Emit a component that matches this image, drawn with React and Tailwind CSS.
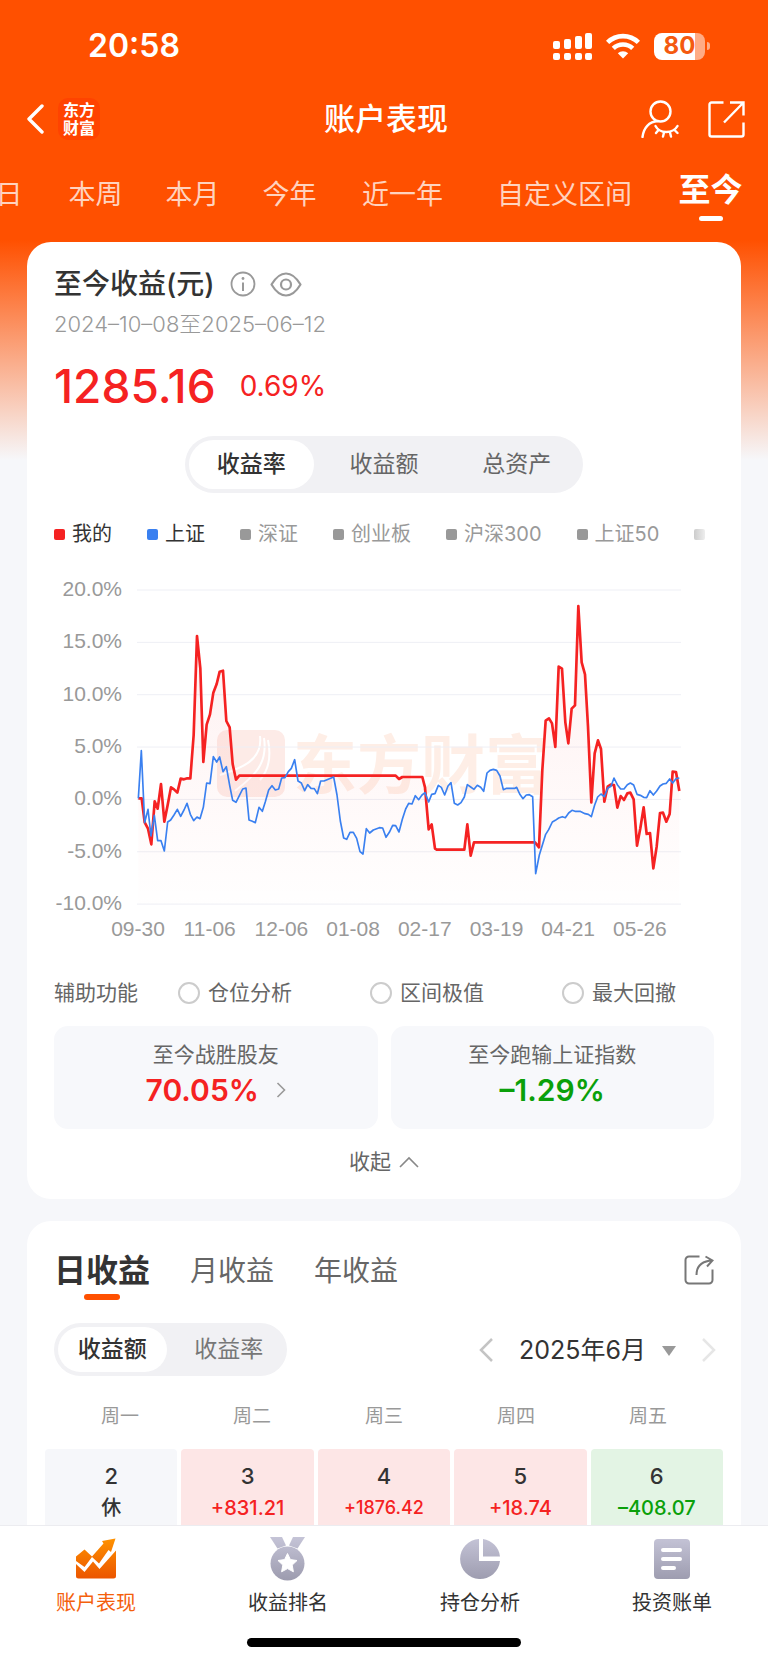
import React, { useState } from 'react';

const ranges = [
  { name: '今日', width: 'w-[103px]' },
  { name: '本周', width: 'w-[97px]' },
  { name: '本月', width: 'w-[97px]' },
  { name: '今年', width: 'w-[97px]' },
  { name: '近一年', width: 'w-[129px]' },
  { name: '自定义区间', width: 'w-[195px]' },
  { name: '至今', width: 'w-[97px]' },
];

const legend = [
  { name: '我的', dot: 'bg-[#f52222]', text: 'text-[#333]' },
  { name: '上证', dot: 'bg-[#3a80f0]', text: 'text-[#333]' },
  { name: '深证', dot: 'bg-[#999]', text: 'text-[#999]' },
  { name: '创业板', dot: 'bg-[#999]', text: 'text-[#999]' },
  { name: '沪深300', dot: 'bg-[#999]', text: 'text-[#999]' },
  { name: '上证50', dot: 'bg-[#999]', text: 'text-[#999]' },
];

const yLabels = ['20.0%', '15.0%', '10.0%', '5.0%', '0.0%', '-5.0%', '-10.0%'];
const xLabels = ['09-30', '11-06', '12-06', '01-08', '02-17', '03-19', '04-21', '05-26'];

// plot area is 1632 x 942 units, 0% sits at y = 625
const mine =
  '4,625 14,625 23,697 33,716 43,763 53,634 62,656 72,582 82,695 92,645 102,592 111,598 121,608 131,566 141,568 151,565 160,565 170,435 180,138 190,235 199,516 209,404 219,373 229,308 239,282 248,245 258,242 268,393 278,412 287,522 297,569 307,557 776,557 786,567 796,561 856,561 864,592 875,718 884,703 894,776 899,779 982,779 991,703 1001,797 1011,757 1194,757 1206,772 1216,540 1226,392 1236,385 1245,400 1255,471 1265,230 1275,236 1285,397 1294,460 1304,356 1314,346 1324,48 1334,217 1344,253 1353,410 1363,637 1373,490 1383,451 1392,477 1402,635 1412,590 1421,584 1431,585 1441,653 1451,618 1461,630 1471,610 1480,608 1490,628 1500,767 1510,715 1520,652 1529,732 1539,729 1549,835 1559,770 1569,669 1578,668 1588,695 1598,672 1607,545 1617,546 1627,603';
const index =
  '4,625 13,482 23,698 33,658 42,738 52,676 62,752 72,752 82,783 92,696 101,690 111,675 121,658 131,679 141,660 150,640 160,673 170,692 180,681 189,686 199,652 209,579 219,581 229,500 239,516 248,501 258,545 268,530 278,586 287,631 297,637 307,617 317,597 327,594 336,690 346,694 355,698 366,652 376,664 385,635 395,600 405,587 415,600 425,597 434,564 444,563 454,545 463,535 473,509 483,573 493,579 503,602 512,584 522,595 532,596 541,611 551,573 561,573 590,561 600,615 610,693 620,744 629,748 639,727 649,727 659,745 669,785 678,792 688,716 698,729 709,720 727,713 737,714 747,742 757,727 767,706 776,707 786,726 796,688 806,657 815,640 825,642 835,617 845,629 855,615 864,608 875,636 884,613 894,611 904,586 913,592 923,615 933,588 942,578 952,640 962,645 972,638 982,621 991,584 1001,591 1011,598 1021,586 1031,592 1040,604 1050,549 1059,541 1069,538 1079,541 1089,558 1099,599 1109,595 1134,595 1139,592 1148,612 1158,626 1168,615 1177,614 1187,620 1196,851 1207,795 1226,733 1235,719 1246,696 1255,691 1265,684 1276,680 1285,683 1295,669 1305,661 1314,664 1329,664 1344,671 1354,673 1363,680 1373,645 1382,621 1392,612 1402,620 1412,595 1422,589 1431,564 1441,584 1451,597 1461,597 1471,584 1480,579 1490,585 1500,613 1510,616 1520,622 1529,623 1539,602 1549,615 1559,603 1569,588 1578,582 1588,580 1598,567 1607,579 1617,566 1627,564';

const weekdays = ['周一', '周二', '周三', '周四', '周五'];
const days = [
  { day: 2, value: '休', box: 'bg-[#f6f7fa]', text: 'text-[#333] text-xl' },
  { day: 3, value: '+831.21', box: 'bg-[#fde6e6]', text: 'text-[#f52222] text-xl' },
  { day: 4, value: '+1876.42', box: 'bg-[#fde6e6]', text: 'text-[#f52222] text-lg' },
  { day: 5, value: '+18.74', box: 'bg-[#fde6e6]', text: 'text-[#f52222] text-xl' },
  { day: 6, value: '–408.07', box: 'bg-[#e3f4e4]', text: 'text-[#0aa00a] text-xl' },
];

const StatusBar = () => (
  <div className="flex h-[87px] items-center justify-between pl-[88px] pr-[58px] pt-[5px]">
    <span className="text-[32px] font-semibold leading-10">20:58</span>
    <div className="flex items-center gap-[14px]">
      <svg width="39" height="27" viewBox="0 0 39 27" fill="currentColor">
        <rect x="0" y="8" width="7" height="8" rx="2" />
        <rect x="11" y="6" width="7" height="10" rx="2" />
        <rect x="22" y="3" width="7" height="13" rx="2" />
        <rect x="32" y="0" width="7" height="16" rx="2" />
        <rect x="0" y="20" width="7" height="7" rx="2" />
        <rect x="11" y="20" width="7" height="7" rx="2" />
        <rect x="22" y="20" width="7" height="7" rx="2" />
        <rect x="32" y="20" width="7" height="7" rx="2" />
      </svg>
      <svg width="34" height="26" viewBox="0 0 34 26" fill="none" stroke="currentColor" strokeWidth="4.6">
        <path d="M1.6 9.4a22 22 0 0 1 30.8 0" />
        <path d="M7.3 15.4a14 14 0 0 1 19.4 0" />
        <path d="M17 25.5l-5.2-5.2a7.4 7.4 0 0 1 10.4 0z" fill="currentColor" stroke="none" />
      </svg>
      <div className="flex items-center gap-[2px]">
        <div className="flex h-[27px] w-[51px] items-center justify-center rounded-lg bg-[linear-gradient(to_right,#fff_80%,#ffab85_80%)]">
          <span className="text-2xl font-bold leading-none text-[#f45a10]">80</span>
        </div>
        <div className="h-2 w-[3px] rounded-r-full bg-[#ffab85]" />
      </div>
    </div>
  </div>
);

const TitleBar = () => (
  <div className="grid h-16 grid-cols-3 items-center pl-[27px] pr-[23px]">
    <div className="flex items-center gap-[14px]">
      <button aria-label="返回">
        <svg width="17" height="30" viewBox="0 0 17 30" fill="none" stroke="currentColor" strokeWidth="3.4" strokeLinecap="round" strokeLinejoin="round">
          <path d="M15 2L2 15l13 13" />
        </svg>
      </button>
      <div className="flex size-[42px] flex-col items-center justify-center rounded-[10px] bg-[#ff4300] text-base font-bold leading-[18px]">
        <span>东方</span>
        <span>财富</span>
      </div>
    </div>
    <h1 className="text-center text-[31px] font-medium leading-10">账户表现</h1>
    <div className="flex items-center justify-end gap-[29px]">
      <button aria-label="隐藏账户">
        <svg width="38" height="38" viewBox="0 0 38 38" fill="none" stroke="currentColor" strokeWidth="2.4" strokeLinecap="round">
          <circle cx="19.5" cy="11.5" r="10" />
          <path d="M1.5 37C2.500 28 8 21.500 17 21" />
          <path d="M14.500 26c4 8 17.500 8 22 0" />
          <path d="M17.500 30l-2.500 3M23 32.500l-1 4M29 32.500l1 4M33.500 30l3 3" />
        </svg>
      </button>
      <button aria-label="分享">
        <svg width="37" height="37" viewBox="0 0 37 37" fill="none" stroke="currentColor" strokeWidth="2.4">
          <path d="M15.500 1.500H3.500a2 2 0 0 0-2 2V33.500a2 2 0 0 0 2 2H33.500a2 2 0 0 0 2-2V21.500" />
          <path d="M22 1.500h13.500v13M35 2L16 21.500" />
        </svg>
      </button>
    </div>
  </div>
);

const PerformanceChart = () => (
  <svg className="mt-[27px] block w-full" viewBox="0 0 660 370" role="img" aria-label="收益率走势">
    <defs>
      <linearGradient id="area" x1="0" y1="0" x2="0" y2="1">
        <stop offset="0" stopColor="#f52222" stopOpacity="0.07" />
        <stop offset="1" stopColor="#f52222" stopOpacity="0.003" />
      </linearGradient>
    </defs>
    <rect x="163" y="155" width="68" height="67" rx="10" fill="#fdebe7" />
    <g fill="none" stroke="#fff" strokeWidth="2">
      <path d="M206 161c3 24-18 32-40 39" />
      <path d="M210 163c4 26-10 38-29 53" />
      <path d="M214 165c4 20-1 32-8 40" />
    </g>
    <text x="239" y="213" fill="#feeee6" className="text-[64px] font-bold">东方财富</text>
    {yLabels.map((label, i) => (
      <g key={label}>
        <line x1="83" x2="627" y1={15 + i * 52.35} y2={15 + i * 52.35} stroke="#eeeff5" />
        <text x="68" y={21 + i * 52.35} textAnchor="end" fill="#999" className="font-['Liberation_Sans'] text-[21px]">{label}</text>
      </g>
    ))}
    {xLabels.map((label, i) => (
      <text key={label} x={84 + i * 71.7} y="361" textAnchor="middle" fill="#999" className="font-['Liberation_Sans'] text-[21px]">{label}</text>
    ))}
    <svg x="83" y="15" width="544" height="314" viewBox="0 0 1632 942">
      <polygon points={`4,942 ${mine} 1627,942`} fill="url(#area)" />
      <polyline points={mine} fill="none" stroke="#f52222" strokeWidth="8" strokeLinejoin="round" />
      <polyline points={index} fill="none" stroke="#3a80f0" strokeWidth="5" strokeLinejoin="round" />
    </svg>
  </svg>
);

const BottomNav = () => (
  <nav className="shrink-0 border-t border-[#ececf0] bg-white">
    <svg className="absolute size-0">
      <defs>
        <linearGradient id="navOn" x1="0" y1="0" x2="0" y2="46" gradientUnits="userSpaceOnUse">
          <stop offset="0" stopColor="#ff9500" />
          <stop offset="1" stopColor="#ea5000" />
        </linearGradient>
        <linearGradient id="navOff" x1="0" y1="0" x2="0" y2="46" gradientUnits="userSpaceOnUse">
          <stop offset="0" stopColor="#c6c5d8" />
          <stop offset="1" stopColor="#9b9aad" />
        </linearGradient>
      </defs>
    </svg>
    <div className="grid grid-cols-4 pt-[10px] text-xl leading-7 text-[#333]">
      <a href="#account" className="flex flex-col items-center gap-[7px] text-[#f4600c]">
        <svg width="42" height="46" viewBox="0 0 42 46" fill="url(#navOn)">
          <path d="M1 28l8.500 8 8.500-10.500 6.500 7.500L41 14.500V40a2.500 2.500 0 0 1-2.500 2.500h-35A2.500 2.500 0 0 1 1 40z" />
          <path d="M1 20.500L9.500 13.500l7.500 7 11.500-13-1.500-2.500L40.500 2.500 36 16l-2.500-2-9.500 13.500-7-6.500-7.500 10L1 25z" />
        </svg>
        账户表现
      </a>
      <a href="#rank" className="flex flex-col items-center gap-[7px]">
        <svg width="42" height="46" viewBox="0 0 42 46" fill="url(#navOff)">
          <path d="M3 1h12l4 8.500-8.500 3z" />
          <path d="M38 1H26l-4 8.500 8.500 3z" />
          <circle cx="20.500" cy="27.500" r="17" />
          <path d="M20.500 17.500l2.900 6.100 6.600.9-4.800 4.600 1.200 6.700-5.900-3.200-5.900 3.200 1.200-6.700-4.800-4.600 6.600-.9z" fill="#fff" stroke="#fff" strokeLinejoin="round" />
        </svg>
        收益排名
      </a>
      <a href="#position" className="flex flex-col items-center gap-[7px]">
        <svg width="42" height="46" viewBox="0 0 42 46" fill="url(#navOff)">
          <path d="M20 3A20 20 0 1 0 41 25H20z" />
          <path d="M24 3A20 20 0 0 1 41 20.500H24z" />
        </svg>
        持仓分析
      </a>
      <a href="#bill" className="flex flex-col items-center gap-[7px]">
        <svg width="42" height="46" viewBox="0 0 42 46">
          <rect x="3" y="3" width="36" height="40" rx="4" fill="url(#navOff)" />
          <path d="M12 14h17M12 23h17M12 32h11" stroke="#fff" strokeWidth="4" strokeLinecap="round" />
        </svg>
        投资账单
      </a>
    </div>
    <div className="mx-auto mb-[15px] mt-[21px] h-[9px] w-[274px] rounded-full bg-black" />
  </nav>
);

const App = () => {
  const [metric, setMetric] = useState('收益率');
  const [unit, setUnit] = useState('收益额');

  return (
    <div className="flex h-screen flex-col overflow-hidden bg-white font-['Inter','Noto_Sans_CJK_SC',sans-serif]" lang="zh-CN">
      <main className="min-h-0 flex-1 overflow-y-auto bg-[#f6f7fa] [scrollbar-width:none]">
        <div className="bg-[linear-gradient(to_bottom,#ff5000_240px,#f6f7fa_460px)]">
          <header className="text-white">
            <StatusBar />
            <TitleBar />
            <div className="overflow-hidden">
              <div className="-ml-14 flex h-[91px]">
                {ranges.map((r) =>
                  r.name === '至今' ? (
                    <button key={r.name} className={`${r.width} flex shrink-0 flex-col items-center pt-[19px] text-[32px] font-bold leading-10`}>
                      {r.name}
                      <span className="mt-[6px] h-[5px] w-6 rounded-full bg-white" />
                    </button>
                  ) : (
                    <button key={r.name} className={`${r.width} flex shrink-0 justify-center whitespace-nowrap pt-6 text-[27px] leading-10 text-white/75`}>
                      {r.name}
                    </button>
                  )
                )}
              </div>
            </div>
          </header>

          <section className="mx-[27px] rounded-3xl bg-white px-[27px] pb-[21px] pt-6">
            <div className="flex items-center">
              <h2 className="text-[28px] font-medium leading-9 text-[#333]">至今收益(元)</h2>
              <svg className="ml-[15px]" width="26" height="26" viewBox="0 0 26 26" fill="none" stroke="#999" strokeWidth="1.8">
                <circle cx="13" cy="13" r="11.500" />
                <path d="M13 11.500V20" strokeWidth="2" />
                <circle cx="13" cy="7.500" r="1.400" fill="#999" stroke="none" />
              </svg>
              <svg className="ml-[14px]" width="32" height="25" viewBox="0 0 32 25" fill="none" stroke="#999" strokeWidth="2.200">
                <path d="M1.500 12.500C6 5 11 1.500 16 1.500S26 5 30.500 12.500C26 20 21 23.500 16 23.500S6 20 1.500 12.500z" strokeLinejoin="round" />
                <circle cx="16" cy="12.500" r="5" />
              </svg>
            </div>
            <p className="mt-2 text-[22px] font-light leading-7 text-[#999]">2024–10–08至2025–06–12</p>
            <div className="mt-5 flex items-center gap-6 text-[#f52222]">
              <span className="text-[46px] font-medium leading-[56px]">1285.16</span>
              <span className="text-[28px] leading-9">0.69%</span>
            </div>

            <div className="mx-auto mt-[22px] grid h-[57px] w-[398px] grid-cols-3 rounded-full bg-[#f1f1f4] py-1 text-[23px]">
              {['收益率', '收益额', '总资产'].map((m) => (
                <button
                  key={m}
                  onClick={() => setMetric(m)}
                  className={`mx-1 rounded-full ${metric === m ? 'bg-white font-medium text-[#333]' : 'text-[#666]'}`}
                >
                  {m}
                </button>
              ))}
            </div>

            <div className="mt-[27px] flex items-center gap-[35px] overflow-hidden text-xl leading-7">
              {legend.map((l) => (
                <span key={l.name} className={`flex shrink-0 items-center gap-[7px] ${l.text}`}>
                  <span className={`size-[11px] rounded-[2px] ${l.dot}`} />
                  {l.name}
                </span>
              ))}
              <span className="size-[11px] shrink-0 rounded-[2px] bg-linear-to-r from-[#ccc] to-[#eee]" />
            </div>

            <PerformanceChart />

            <div className="mt-8 flex items-center text-[21px] leading-8 text-[#666]">
              <span className="w-[124px]">辅助功能</span>
              <div className="flex flex-1 justify-between pr-[38px]">
                {['仓位分析', '区间极值', '最大回撤'].map((name) => (
                  <label key={name} className="flex items-center gap-2">
                    <input type="checkbox" className="size-[22px] appearance-none rounded-full border-2 border-[#ccc] checked:border-[#ff5000]" />
                    {name}
                  </label>
                ))}
              </div>
            </div>

            <div className="mt-[17px] grid grid-cols-2 gap-[13px] text-center text-[21px] leading-8 text-[#666]">
              <a href="#beat" className="h-[103px] rounded-[14px] bg-[#f7f8fb] pt-[13px]">
                至今战胜股友
                <span className="flex items-center justify-center gap-[17px] text-[30px] font-semibold leading-[38px] text-[#f52222]">
                  70.05%
                  <svg width="10" height="16" viewBox="0 0 10 16" fill="none" stroke="#999" strokeWidth="1.600">
                    <path d="M1.500 1l7 7-7 7" />
                  </svg>
                </span>
              </a>
              <div className="h-[103px] rounded-[14px] bg-[#f7f8fb] pt-[13px]">
                至今跑输上证指数
                <span className="block text-[30px] font-semibold leading-[38px] text-[#0aa00a]">–1.29%</span>
              </div>
            </div>

            <button className="mx-auto mt-[17px] flex items-center gap-2 text-[21px] leading-8 text-[#666]">
              收起
              <svg width="20" height="12" viewBox="0 0 20 12" fill="none" stroke="#888" strokeWidth="1.600">
                <path d="M1 11l9-9 9 9" />
              </svg>
            </button>
          </section>

          <section className="mx-[27px] mt-[22px] rounded-t-3xl bg-white px-[27px] pb-10 pt-[30px]">
            <div className="flex items-start justify-between">
              <div className="flex gap-10 text-[28px] leading-10 text-[#666]">
                <button className="flex flex-col items-center text-[32px] font-bold text-[#333]">
                  日收益
                  <span className="mt-[3px] h-[6px] w-9 rounded-full bg-[#ff5000]" />
                </button>
                <button className="flex">月收益</button>
                <button className="flex">年收益</button>
              </div>
              <button aria-label="分享收益" className="pt-1">
                <svg width="30" height="30" viewBox="0 0 30 30" fill="none" stroke="#777" strokeWidth="2">
                  <path d="M15.500 1.500H5a3.500 3.500 0 0 0-3.500 3.500V25A3.500 3.500 0 0 0 5 28.500H25a3.500 3.500 0 0 0 3.500-3.500V14.500" />
                  <path d="M12.500 20c0-9 5-14 16-14.500M21.500 1.500l7 4-5.500 6" />
                </svg>
              </button>
            </div>

            <div className="mt-[23px] flex items-center justify-between">
              <div className="grid h-[53px] w-[233px] grid-cols-2 rounded-full bg-[#f1f1f4] py-1 text-[23px]">
                {['收益额', '收益率'].map((u) => (
                  <button
                    key={u}
                    onClick={() => setUnit(u)}
                    className={`mx-1 rounded-full ${unit === u ? 'bg-white font-medium text-[#333]' : 'text-[#777]'}`}
                  >
                    {u}
                  </button>
                ))}
              </div>
              <div className="-mr-[2px] flex items-center">
                <button aria-label="上个月">
                  <svg width="14" height="24" viewBox="0 0 14 24" fill="none" stroke="#c4c4c4" strokeWidth="2.500">
                    <path d="M13 1L2 12l11 11" />
                  </svg>
                </button>
                <div className="relative ml-[26px] mr-[26px]">
                  <select aria-label="月份" className="w-[157px] appearance-none bg-transparent text-[25px] leading-8 text-[#333]">
                    <option>2025年6月</option>
                  </select>
                  <svg className="pointer-events-none absolute right-0 top-3" width="14" height="10" viewBox="0 0 14 10" fill="#999">
                    <path d="M0 0h14L7 10z" />
                  </svg>
                </div>
                <button aria-label="下个月">
                  <svg width="14" height="24" viewBox="0 0 14 24" fill="none" stroke="#e6e6e6" strokeWidth="2.500">
                    <path d="M1 1l11 11L1 23" />
                  </svg>
                </button>
              </div>
            </div>

            <div className="mt-[27px] grid grid-cols-5 text-center text-[19px] leading-7 text-[#999]">
              {weekdays.map((w) => (
                <span key={w}>{w}</span>
              ))}
            </div>
            <div className="-mx-[9px] mt-[18px] grid grid-cols-5 gap-1 text-center font-medium leading-7">
              {days.map((d) => (
                <div key={d.day} className={`h-[90px] rounded-[4px] pt-[13px] ${d.box}`}>
                  <div className="text-[22px] leading-7 text-[#333]">{d.day}</div>
                  <div className={`mt-1 leading-7 ${d.text}`}>{d.value}</div>
                </div>
              ))}
            </div>
          </section>
        </div>
      </main>
      <BottomNav />
    </div>
  );
};

export default App;
